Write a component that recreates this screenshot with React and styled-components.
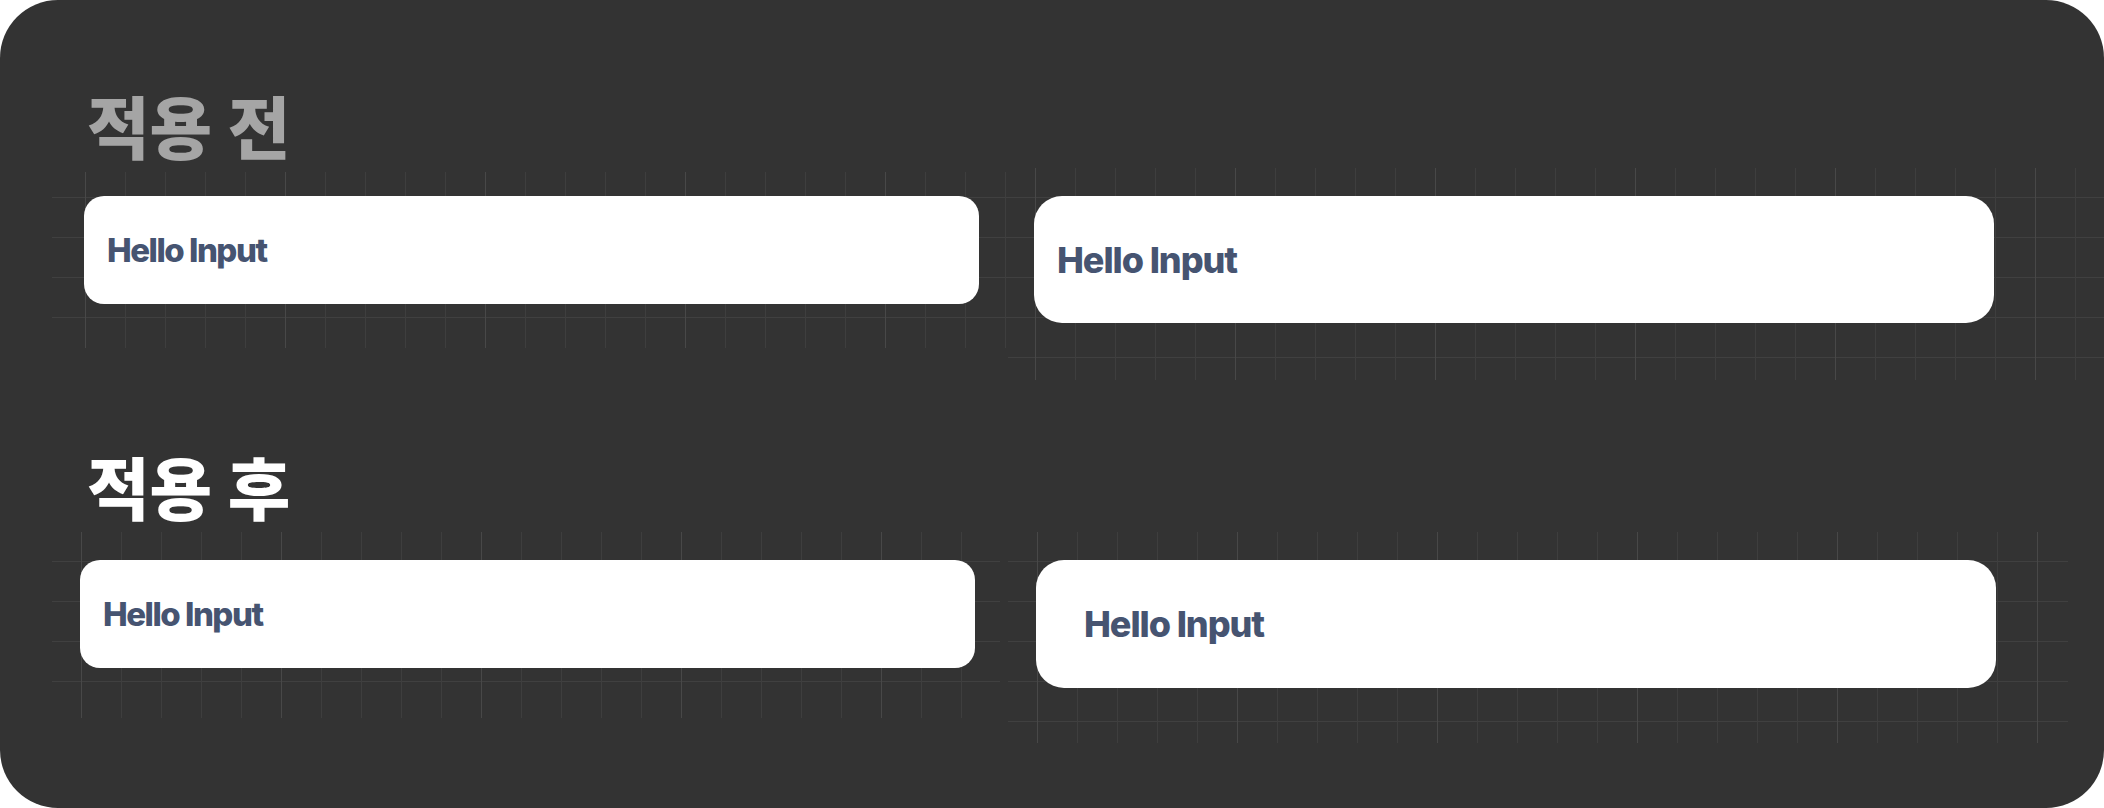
import React from 'react';
import styled, { createGlobalStyle } from 'styled-components';

const GlobalStyle = createGlobalStyle`
  html, body {
    margin: 0;
    padding: 0;
    background: #ffffff;
  }
`;

const Board = styled.div`
  box-sizing: border-box;
  width: 2104px;
  height: 808px;
  background: #333333;
  border-radius: 58px;
  overflow: hidden;
  padding: 91px 0 0 52px;
  display: flex;
  flex-direction: column;
`;

const Section = styled.section`
  display: flex;
  flex-direction: column;
  margin-top: ${(p) => p.$top || 0}px;
`;

const Title = styled.h2`
  margin: 0 0 0 35px;
  height: 72px;
  font-family: "Noto Sans CJK KR", "Noto Sans", sans-serif;
  font-weight: 900;
  font-size: 68px;
  line-height: 68px;
  letter-spacing: 0;
  color: ${(p) => (p.$muted ? '#a5a5a5' : '#ffffff')};
`;

const Row = styled.div`
  display: flex;
  align-items: flex-start;
  margin-top: ${(p) => p.$top}px;
`;

// guide grid that sits behind each field
const GridArea = styled.div`
  flex: none;
  box-sizing: border-box;
  width: ${(p) => p.$w}px;
  height: ${(p) => p.$h}px;
  margin-top: ${(p) => p.$mt || 0}px;
  margin-left: ${(p) => p.$ml || 0}px;
  padding: ${(p) => p.$pt}px 0 0 ${(p) => p.$pl}px;
  background-image:
    linear-gradient(to right, #484848 1px, transparent 1px),
    linear-gradient(to right, #3e3e3e 1px, transparent 1px),
    linear-gradient(to bottom, #404040 1px, transparent 1px);
  background-size: 200px 100%, 40px 100%, 100% 40px;
  background-position:
    ${(p) => p.$ox}px 0,
    ${(p) => p.$ox}px 0,
    0 ${(p) => p.$oy}px;
`;

const Field = styled.input`
  display: block;
  box-sizing: border-box;
  width: ${(p) => p.$w}px;
  height: ${(p) => p.$h}px;
  border: none;
  outline: none;
  margin: 0;
  border-radius: ${(p) => p.$r}px;
  background: #ffffff;
  padding: 0 0 0 ${(p) => p.$pl}px;
  font-family: Inter, "Noto Sans", sans-serif;
  font-weight: 800;
  font-size: ${(p) => p.$fs}px;
  letter-spacing: ${(p) => p.$ls}em;
  color: #465471;
`;

const small = { $w: 895, $h: 108, $r: 20, $fs: 33, $ls: -0.045 };
const large = { $w: 960, $h: 127, $r: 28, $fs: 36, $ls: -0.03 };

export default function App() {
  return (
    <>
      <GlobalStyle />
      <Board>
        <Section>
          <Title $muted>적용 전</Title>
          <Row $top={5}>
            <GridArea $w={980} $h={176} $mt={4} $pt={24} $pl={32} $ox={33} $oy={25}>
              <Field {...small} $pl={23} defaultValue="Hello Input" readOnly />
            </GridArea>
            <GridArea $w={1096} $h={212} $ml={-24} $pt={28} $pl={26} $ox={27} $oy={29}>
              <Field {...large} $pl={23} defaultValue="Hello Input" readOnly />
            </GridArea>
          </Row>
        </Section>
        <Section $top={72}>
          <Title>적용 후</Title>
          <Row $top={8}>
            <GridArea $w={948} $h={186} $pt={28} $pl={28} $ox={29} $oy={29}>
              <Field {...small} $pl={23} defaultValue="Hello Input" readOnly />
            </GridArea>
            <GridArea $w={1060} $h={211} $ml={8} $pt={28} $pl={28} $ox={29} $oy={29}>
              <Field {...large} $h={128} $pl={48} defaultValue="Hello Input" readOnly />
            </GridArea>
          </Row>
        </Section>
      </Board>
    </>
  );
}
